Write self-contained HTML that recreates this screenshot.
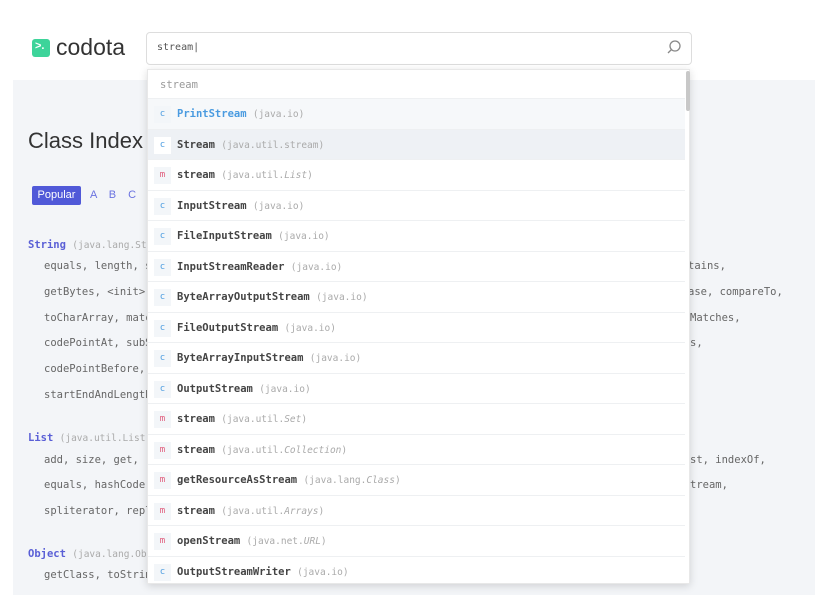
<!DOCTYPE html>
<html><head><style>
*{margin:0;padding:0;box-sizing:border-box}
body{width:822px;height:604px;background:#fff;position:relative;overflow:hidden;font-family:"Liberation Sans",sans-serif}
.mono{font-family:"DejaVu Sans Mono","Liberation Mono",monospace}
.abs{position:absolute;white-space:nowrap}
#panel{position:absolute;left:13px;top:80px;width:802px;height:515px;background:#f3f5f8}
.ln{position:absolute;font-size:10.5px;color:#666;font-family:"DejaVu Sans Mono",monospace;white-space:nowrap}
.cls{font-weight:bold;color:#5a5fd6}
.pk{color:#aaa;font-size:9.5px}
#dd{position:absolute;left:147px;top:69px;width:543px;height:515px;background:#fff;box-shadow:0 2px 8px rgba(0,0,0,.15);border:1px solid #e8e8e8}
.row{position:absolute;left:0;width:537px;height:30.5px;border-bottom:1px solid #eef0f2;font-family:"DejaVu Sans Mono",monospace;font-size:10.5px;color:#444}
.bd{position:absolute;left:6px;top:7px;width:17px;height:17px;background:#f3f6f9;font-size:9px;text-align:center;line-height:17px;color:#4a9be0}
.bd.m{color:#e05a7a}
.nm{position:absolute;left:29px;top:9px;font-weight:bold}
.nm span{font-weight:normal;color:#aaa;font-size:9.5px}
</style></head><body>
<div class="abs" style="left:32px;top:39px;width:18px;height:18px;background:#3dd49a;border-radius:3px"></div>
<div class="abs" style="left:35px;top:40px;color:#fff;font-size:11px;font-weight:bold">&gt;.</div>
<div class="abs" style="left:56px;top:34px;font-size:23px;color:#333">codota</div>
<div class="abs" style="left:146px;top:32px;width:546px;height:33px;border:1px solid #ddd;border-radius:4px"></div>
<div class="abs mono" style="left:157px;top:42px;font-size:10px;color:#555">stream|</div>
<svg class="abs" style="left:666px;top:39px" width="16" height="16" viewBox="0 0 16 16"><circle cx="9" cy="7" r="5" fill="none" stroke="#888" stroke-width="1.3"/><path d="M5.5 10.5L2 14" stroke="#888" stroke-width="1.3"/></svg>
<div id="panel"></div>
<div class="abs" style="left:28px;top:128px;font-size:22px;color:#333">Class Index</div>
<div class="abs" style="left:32px;top:186px;width:49px;height:19px;background:#5059d8;border-radius:2px;color:#fff;font-size:11px;line-height:19px;text-align:center">Popular</div>
<div class="abs" style="left:90px;top:189px;font-size:11px;color:#6a72e0;word-spacing:9px">A B C</div>
<div class="ln" style="left:28px;top:239px"><span class="cls">String</span> <span class="pk">(java.lang.String)</span></div>
<div class="ln" style="left:44px;top:260px">equals, length, s</div>
<div class="ln" style="left:44px;top:286px">getBytes, &lt;init&gt;,</div>
<div class="ln" style="left:44px;top:312px">toCharArray, matc</div>
<div class="ln" style="left:44px;top:337px">codePointAt, subS</div>
<div class="ln" style="left:44px;top:363px">codePointBefore,</div>
<div class="ln" style="left:44px;top:389px">startEndAndLength</div>
<div class="ln" style="left:28px;top:432px"><span class="cls">List</span> <span class="pk">(java.util.List)</span></div>
<div class="ln" style="left:44px;top:454px">add, size, get,</div>
<div class="ln" style="left:44px;top:479px">equals, hashCode,</div>
<div class="ln" style="left:44px;top:505px">spliterator, repl</div>
<div class="ln" style="left:28px;top:548px"><span class="cls">Object</span> <span class="pk">(java.lang.Object)</span></div>
<div class="ln" style="left:44px;top:569px">getClass, toStrin</div>
<div class="ln" style="left:688px;top:260px">tains,</div>
<div class="ln" style="left:688px;top:286px">ase, compareTo,</div>
<div class="ln" style="left:690px;top:312px">Matches,</div>
<div class="ln" style="left:690px;top:337px">s,</div>
<div class="ln" style="left:690px;top:454px">st, indexOf,</div>
<div class="ln" style="left:690px;top:479px">tream,</div>
<div id="dd">
<div class="row" style="top:0;height:29px"><span class="abs" style="left:12px;top:9px;color:#999">stream</span></div>
<div class="row" style="top:29px;background:#f6f8fa"><div class="bd">c</div><div class="nm" style="color:#4a9be0">PrintStream <span>(java.io)</span></div></div>
<div class="row" style="top:59.5px;background:#eef1f5"><div class="bd" style="background:#fff">c</div><div class="nm">Stream <span>(java.util.stream)</span></div></div>
<div class="row" style="top:90px"><div class="bd m">m</div><div class="nm">stream <span>(java.util.<i>List</i>)</span></div></div>
<div class="row" style="top:120.5px"><div class="bd">c</div><div class="nm">InputStream <span>(java.io)</span></div></div>
<div class="row" style="top:151px"><div class="bd">c</div><div class="nm">FileInputStream <span>(java.io)</span></div></div>
<div class="row" style="top:181.5px"><div class="bd">c</div><div class="nm">InputStreamReader <span>(java.io)</span></div></div>
<div class="row" style="top:212px"><div class="bd">c</div><div class="nm">ByteArrayOutputStream <span>(java.io)</span></div></div>
<div class="row" style="top:242.5px"><div class="bd">c</div><div class="nm">FileOutputStream <span>(java.io)</span></div></div>
<div class="row" style="top:273px"><div class="bd">c</div><div class="nm">ByteArrayInputStream <span>(java.io)</span></div></div>
<div class="row" style="top:303.5px"><div class="bd">c</div><div class="nm">OutputStream <span>(java.io)</span></div></div>
<div class="row" style="top:334px"><div class="bd m">m</div><div class="nm">stream <span>(java.util.<i>Set</i>)</span></div></div>
<div class="row" style="top:364.5px"><div class="bd m">m</div><div class="nm">stream <span>(java.util.<i>Collection</i>)</span></div></div>
<div class="row" style="top:395px"><div class="bd m">m</div><div class="nm">getResourceAsStream <span>(java.lang.<i>Class</i>)</span></div></div>
<div class="row" style="top:425.5px"><div class="bd m">m</div><div class="nm">stream <span>(java.util.<i>Arrays</i>)</span></div></div>
<div class="row" style="top:456px"><div class="bd m">m</div><div class="nm">openStream <span>(java.net.<i>URL</i>)</span></div></div>
<div class="row" style="top:486.5px;border-bottom:none"><div class="bd">c</div><div class="nm">OutputStreamWriter <span>(java.io)</span></div></div>
<div class="abs" style="left:538px;top:1px;width:4px;height:40px;background:#c8c8c8;border-radius:2px"></div>
</div>
</body></html>
